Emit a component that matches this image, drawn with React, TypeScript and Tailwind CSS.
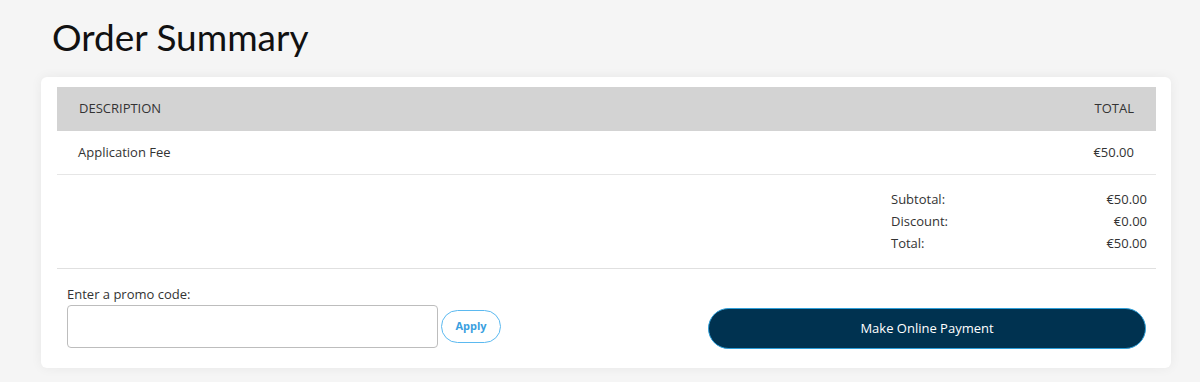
export default function App() {
  return (
    <div className="min-h-[382px] bg-[#f5f5f5] font-['Open_Sans',sans-serif] text-[13px] text-[#333]">
      <div className="pl-[52px] pt-[13px] pb-[17px]">
        <h1 className="font-['Lato',sans-serif] text-[37px] leading-[47px] text-[#111]">Order Summary</h1>
      </div>

      <div className="mx-[41px] w-[1130px] rounded-md bg-white pl-4 pr-[15px] pt-[10px] pb-[20px] shadow-[0_0_12px_rgba(0,0,0,0.06)]">
        {/* Table header */}
        <div className="flex h-[44px] items-center justify-between bg-[#d3d3d3] pl-[22px] pr-[22px]">
          <span>DESCRIPTION</span>
          <span>TOTAL</span>
        </div>

        {/* Line item */}
        <div className="flex h-[44px] items-center justify-between border-b border-[#e6e6e6] pl-[21px] pr-[22px]">
          <span>Application Fee</span>
          <span>€50.00</span>
        </div>

        {/* Totals */}
        <div className="flex justify-end border-b border-[#e0e0e0] pr-[9px] pt-[13px] pb-[14px]">
          <div className="w-[256px] leading-[22px]">
            <div className="flex justify-between">
              <span>Subtotal:</span>
              <span>€50.00</span>
            </div>
            <div className="flex justify-between">
              <span>Discount:</span>
              <span>€0.00</span>
            </div>
            <div className="flex justify-between">
              <span>Total:</span>
              <span>€50.00</span>
            </div>
          </div>
        </div>

        {/* Promo + payment */}
        <div className="flex items-end justify-between pl-[10px] pr-[10px] pt-[16px]">
          <div>
            <label className="block leading-[18px] mb-[2px]">Enter a promo code:</label>
            <div className="flex items-center gap-[3px]">
              <input className="h-[43px] w-[371px] rounded border border-[#bdbdbd] bg-white px-2 outline-none" />
              <button className="h-[33px] w-[60px] rounded-full border border-[#5bb9f0] bg-white text-[11px] font-bold text-[#3a9fe0]">
                Apply
              </button>
            </div>
          </div>
          <button className="mb-[-1px] h-[41px] w-[438px] rounded-full border border-[#2d9fd9] bg-[#003250] text-white">
            Make Online Payment
          </button>
        </div>
      </div>
    </div>
  );
}
